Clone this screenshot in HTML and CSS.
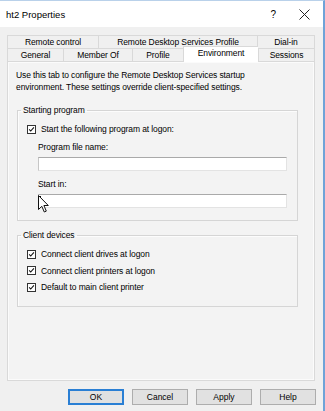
FILE: index.html
```html
<!DOCTYPE html>
<html lang="en">
<head>
  <meta charset="UTF-8">
  <title>ht2 Properties</title>
  <link rel="stylesheet" href="styles.css">
</head>
<body>
  <div class="window">

    <!-- Title bar -->
    <div class="titlebar">
      <span class="title">ht2 Properties</span>
      <span class="help-btn">?</span>
      <span class="close-btn">
        <svg width="11" height="11" viewBox="0 0 11 11"><path d="M0.5 0.5 L10.5 10.5 M10.5 0.5 L0.5 10.5" stroke="#222" stroke-width="1"/></svg>
      </span>
    </div>

    <!-- Tabs -->
    <div class="tabs">
      <div class="tab-row">
        <div class="tab w91">Remote control</div>
        <div class="tab w159">Remote Desktop Services Profile</div>
        <div class="tab w58">Dial-in</div>
      </div>
      <div class="tab-row">
        <div class="tab w56">General</div>
        <div class="tab w69">Member Of</div>
        <div class="tab w51">Profile</div>
        <div class="tab w75 active">Environment</div>
        <div class="tab w57">Sessions</div>
      </div>
    </div>

    <!-- Tab page -->
    <div class="page">
      <p class="intro">Use this tab to configure the Remote Desktop Services startup environment. These settings override client-specified settings.</p>

      <fieldset class="group group-start">
        <legend>Starting program</legend>
        <div class="check-row">
          <span class="checkbox"><svg width="9" height="9" viewBox="0 0 9 9"><path d="M1.5 4.3 L3.5 6.5 L7.6 1.8" fill="none" stroke="#111" stroke-width="1.4"/></svg></span>
          <span>Start the following program at logon:</span>
        </div>
        <div class="field-label">Program file name:</div>
        <div class="textbox"></div>
        <div class="field-label second">Start in:</div>
        <div class="textbox focused">
          <span class="caret"></span>
          <svg class="pointer" width="11" height="18" viewBox="0 0 11 18"><path d="M0.5 0.5 L0.5 14.5 L3.8 11.3 L6.3 17 L8.3 16.1 L5.9 10.5 L10.3 10.5 Z" fill="#fff" stroke="#111" stroke-width="1"/></svg>
        </div>
      </fieldset>

      <fieldset class="group group-devices">
        <legend>Client devices</legend>
        <div class="check-row">
          <span class="checkbox"><svg width="9" height="9" viewBox="0 0 9 9"><path d="M1.5 4.3 L3.5 6.5 L7.6 1.8" fill="none" stroke="#111" stroke-width="1.4"/></svg></span>
          <span>Connect client drives at logon</span>
        </div>
        <div class="check-row">
          <span class="checkbox"><svg width="9" height="9" viewBox="0 0 9 9"><path d="M1.5 4.3 L3.5 6.5 L7.6 1.8" fill="none" stroke="#111" stroke-width="1.4"/></svg></span>
          <span>Connect client printers at logon</span>
        </div>
        <div class="check-row">
          <span class="checkbox"><svg width="9" height="9" viewBox="0 0 9 9"><path d="M1.5 4.3 L3.5 6.5 L7.6 1.8" fill="none" stroke="#111" stroke-width="1.4"/></svg></span>
          <span>Default to main client printer</span>
        </div>
      </fieldset>
    </div>

    <!-- Dialog buttons -->
    <div class="buttons">
      <button class="btn default">OK</button>
      <button class="btn">Cancel</button>
      <button class="btn">Apply</button>
      <button class="btn">Help</button>
    </div>

  </div>
</body>
</html>
```

FILE: styles.css
```css
/* Page */
body {
  margin: 0;
  font-family: 'Liberation Sans', Arial, sans-serif;
  font-size: 8.5px;
  letter-spacing: -0.1px;
  color: #000;
  background-color: #ffffff;
}

.window {
  width: 323px;
  height: 410px;
  background-color: #f0f0f0;
  border-top: 1px solid #b9d1ea;
  border-right: 2px solid #6fa3d8;
}

/* Title bar */
.titlebar {
  height: 26px;
  background-color: #ffffff;
  display: flex;
  align-items: center;
  padding-left: 6px;
}

.titlebar .title {
  font-size: 9.5px;
  letter-spacing: 0;
  flex: 1;
}

.titlebar .help-btn {
  font-size: 10px;
  margin-right: 23px;
}

.titlebar .close-btn {
  display: flex;
  margin-right: 13px;
}

/* Tabs */
.tabs {
  padding: 8px 0 0 7px;
}

.tab-row {
  display: flex;
  height: 13px;
}

.tab {
  box-sizing: border-box;
  height: 13px;
  line-height: 12px;
  text-align: center;
  border: 1px solid #d9d9d9;
  border-bottom: none;
  border-right: none;
  background-color: #f0f0f0;
  white-space: nowrap;
}

.tab:last-child {
  border-right: 1px solid #d9d9d9;
}

.tab.active {
  background-color: #ffffff;
  height: 16px;
  margin-top: -2px;
  position: relative;
  z-index: 1;
}

.w91 { width: 91px; }
.w159 { width: 159px; }
.w58 { width: 58px; }
.w56 { width: 56px; }
.w69 { width: 69px; }
.w51 { width: 51px; }
.w75 { width: 75px; }
.w57 { width: 57px; }

/* Tab page */
.page {
  box-sizing: border-box;
  margin-left: 7px;
  width: 308px;
  height: 320px;
  border: 1px solid #d9d9d9;
  background-color: #f3f3f3;
  box-shadow: inset 0 0 0 1px #fbfbfb;
  padding: 7px 0 0 8px;
}

.intro {
  margin: 0;
  width: 250px;
  line-height: 12px;
}

/* Group boxes */
.group {
  margin: 12px 0 0 1px;
  padding: 0;
  width: 279px;
  border: 1px solid #d5d5d5;
  box-shadow: inset 1px 1px 0 #fcfcfc;
}

.group legend {
  margin-left: 3px;
  padding: 0 2px;
  line-height: 10px;
}

.group-start {
  padding-bottom: 12px;
}

.group-devices {
  margin-top: 9px;
  padding-top: 6px;
  padding-bottom: 10px;
}

.check-row {
  display: flex;
  align-items: center;
  height: 16.5px;
  padding-left: 9px;
}

.group-start .check-row {
  height: 16px;
  margin-top: 6px;
}

.checkbox {
  box-sizing: border-box;
  width: 9px;
  height: 9px;
  border: 1px solid #333;
  background-color: #fff;
  display: flex;
  align-items: center;
  justify-content: center;
  margin-right: 5px;
}

.checkbox svg {
  width: 7px;
  height: 7px;
}

.field-label {
  margin: 4px 0 0 20px;
  line-height: 12px;
}

.field-label.second {
  margin-top: 7px;
}

.textbox {
  box-sizing: border-box;
  margin: 4px 0 0 20px;
  width: 249px;
  height: 14px;
  background-color: #fff;
  border: 1px solid #e3e3e3;
  border-top-color: #a9a9a9;
  border-left-color: #c6c6c6;
}

.textbox.focused {
  position: relative;
}

.textbox .caret {
  position: absolute;
  left: 1px;
  top: 1px;
  width: 1px;
  height: 8px;
  background-color: #000;
}

.textbox .pointer {
  position: absolute;
  left: -1px;
  top: 0px;
}

/* Buttons */
.buttons {
  display: flex;
  justify-content: flex-end;
  gap: 8px;
  padding: 8px 7px 0 0;
}

.btn {
  box-sizing: border-box;
  width: 56px;
  height: 16px;
  padding: 0;
  font-family: 'Liberation Sans', Arial, sans-serif;
  font-size: 8.5px;
  color: #000;
  background-color: #e1e1e1;
  border: 1px solid #adadad;
}

.btn.default {
  border: 2px solid #2a7fd4;
}
```
